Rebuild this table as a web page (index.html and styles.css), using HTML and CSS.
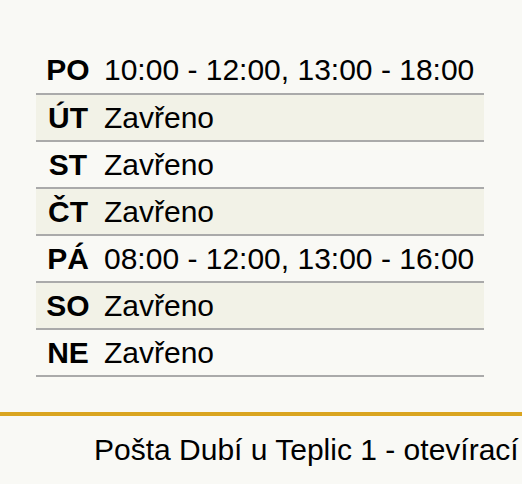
FILE: index.html
```
<!DOCTYPE html>
<html lang="cs">
<head>
<meta charset="utf-8">
<title>Pošta Dubí u Teplic 1 - otevírací doba</title>
<link rel="stylesheet" href="styles.css">
</head>
<body>
<main class="page">
  <table class="hours">
    <tr><th>PO</th><td>10:00 - 12:00, 13:00 - 18:00</td></tr>
    <tr class="alt"><th>ÚT</th><td>Zavřeno</td></tr>
    <tr><th>ST</th><td>Zavřeno</td></tr>
    <tr class="alt"><th>ČT</th><td>Zavřeno</td></tr>
    <tr><th>PÁ</th><td>08:00 - 12:00, 13:00 - 16:00</td></tr>
    <tr class="alt"><th>SO</th><td>Zavřeno</td></tr>
    <tr><th>NE</th><td>Zavřeno</td></tr>
  </table>
</main>
<footer class="footer">
  <p class="footer-title">Pošta Dubí u Teplic 1 - otevírací</p>
</footer>
</body>
</html>
```
FILE: styles.css
```
html, body {
  margin: 0;
  padding: 0;
  background: #f9f9f5;
  font-family: "Liberation Sans", Arial, sans-serif;
  color: #000;
  overflow: hidden;
}

.page {
  padding: 47px 38px 35px 36px;
}

.hours {
  width: 448px;
  border-collapse: collapse;
  font-size: 30px;
}

.hours tr {
  height: 47px;
  border-bottom: 2px solid #aaaaaa;
}

.hours tr.alt {
  background: #f2f2e7;
}

.hours th {
  width: 64px;
  padding: 0;
  text-align: center;
  font-weight: bold;
}

.hours td {
  padding: 0 0 0 4px;
  text-align: left;
  white-space: nowrap;
}

.footer {
  border-top: 4px solid #daa520;
}

.footer-title {
  margin: 0;
  padding: 17px 0 0 94px;
  font-size: 30px;
  white-space: nowrap;
}
```
